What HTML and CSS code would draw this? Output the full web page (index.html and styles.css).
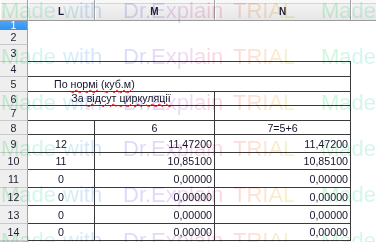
FILE: index.html
```html
<!DOCTYPE html>
<html lang="uk">
<head>
<meta charset="utf-8">
<title>Sheet</title>
<link rel="stylesheet" href="styles.css">
</head>
<body>
<div class="sheet">
  <div class="grid">
    <div class="ch"></div><div class="ch">L</div><div class="ch">M</div><div class="ch">N</div><div class="ch last"></div>

    <div class="rh sel">1</div><div class="s4"></div>
    <div class="rh">2</div><div class="s4"></div>
    <div class="rh">3</div><div class="s3 tb"></div><div></div>
    <div class="rh">4</div><div class="s3 b"></div><div></div>
    <div class="rh">5</div><div class="s3 b t5 vis"><span>По <span class="sp">нормі</span> (<span class="sp">куб.м</span>)</span></div><div></div>
    <div class="rh">6</div><div class="s2 b c vis up"><span>За <span class="sp">відсут</span> <span class="sp">циркуляції</span></span></div><div class="b"></div><div></div>
    <div class="rh">7</div><div class="s2 b"></div><div class="b"></div><div></div>
    <div class="rh">8</div><div class="b"></div><div class="b c">6</div><div class="b c">7=5+6</div><div></div>
    <div class="rh">9</div><div class="b c">12</div><div class="b r">11,47200</div><div class="b r">11,47200</div><div></div>
    <div class="rh">10</div><div class="b c">11</div><div class="b r">10,85100</div><div class="b r">10,85100</div><div></div>
    <div class="rh">11</div><div class="b c">0</div><div class="b r">0,00000</div><div class="b r">0,00000</div><div></div>
    <div class="rh">12</div><div class="b c">0</div><div class="b r">0,00000</div><div class="b r">0,00000</div><div></div>
    <div class="rh">13</div><div class="b c">0</div><div class="b r">0,00000</div><div class="b r">0,00000</div><div></div>
    <div class="rh">14</div><div class="b c">0</div><div class="b r">0,00000</div><div class="b r">0,00000</div><div></div>
    <div class="rh">15</div><div class="s4"></div>
  </div>

  <div class="watermark" aria-hidden="true">
    <div class="wl"><span class="wu"><span class="w1">Made</span><span class="w2">with</span><span class="w3">Dr.Explain</span><span class="w4">TRIAL</span></span><span class="wu"><span class="w1">Made</span><span class="w2">with</span><span class="w3">Dr.Explain</span><span class="w4">TRIAL</span></span></div>
    <div class="wl"><span class="wu"><span class="w1">Made</span><span class="w2">with</span><span class="w3">Dr.Explain</span><span class="w4">TRIAL</span></span><span class="wu"><span class="w1">Made</span><span class="w2">with</span><span class="w3">Dr.Explain</span><span class="w4">TRIAL</span></span></div>
    <div class="wl"><span class="wu"><span class="w1">Made</span><span class="w2">with</span><span class="w3">Dr.Explain</span><span class="w4">TRIAL</span></span><span class="wu"><span class="w1">Made</span><span class="w2">with</span><span class="w3">Dr.Explain</span><span class="w4">TRIAL</span></span></div>
    <div class="wl"><span class="wu"><span class="w1">Made</span><span class="w2">with</span><span class="w3">Dr.Explain</span><span class="w4">TRIAL</span></span><span class="wu"><span class="w1">Made</span><span class="w2">with</span><span class="w3">Dr.Explain</span><span class="w4">TRIAL</span></span></div>
    <div class="wl"><span class="wu"><span class="w1">Made</span><span class="w2">with</span><span class="w3">Dr.Explain</span><span class="w4">TRIAL</span></span><span class="wu"><span class="w1">Made</span><span class="w2">with</span><span class="w3">Dr.Explain</span><span class="w4">TRIAL</span></span></div>
    <div class="wl"><span class="wu"><span class="w1">Made</span><span class="w2">with</span><span class="w3">Dr.Explain</span><span class="w4">TRIAL</span></span><span class="wu"><span class="w1">Made</span><span class="w2">with</span><span class="w3">Dr.Explain</span><span class="w4">TRIAL</span></span></div>
  </div>
</div>
</body>
</html>
```
FILE: styles.css
```css
html, body {
  margin: 0;
  padding: 0;
  background: #fff;
}
body {
  width: 376px;
  height: 242px;
  overflow: hidden;
  font-family: "Liberation Sans", Arial, sans-serif;
  font-size: 10.67px;
  color: #14142a;
}
.sheet {
  position: relative;
  width: 376px;
  height: 242px;
  overflow: hidden;
}
.grid {
  display: grid;
  grid-template-columns: 28px 67px 120px 136px 1fr;
  grid-template-rows: 21px 9px 15px 17px 15px 15px 14px 15px 14px 18px 17px 18px 18px 18px 17px 1fr;
  height: 242px;
}
.grid > div {
  box-sizing: border-box;
  display: flex;
  align-items: center;
  min-width: 0;
  overflow: hidden;
  white-space: nowrap;
}
.grid > .vis {
  overflow: visible;
}
.grid > .up {
  padding-bottom: 2px;
}
.ch {
  background: linear-gradient(to bottom, #f8f8f8 0, #f8f8f8 3px, #d6d6d6 3px, #d6d6d6 4px, #f3f3f3 4px, #e6e6e6 100%);
  border-bottom: 1px solid #9c9c9c;
  border-right: 1px solid #a2a2a2;
  box-shadow: inset 1px 0 0 #fdfdfd;
  justify-content: center;
  font-weight: bold;
  font-size: 10px;
  color: #1e1e3a;
  padding-top: 3px;
}
.ch.last {
  border-right: none;
}
.rh {
  background: #efefef;
  border-right: 1px solid #a2a2a2;
  border-bottom: 1px solid #c9c9c9;
  justify-content: center;
  color: #1e1e30;
}
.rh.sel {
  background: linear-gradient(to bottom, #4aa6f8, #3594f0);
  color: #fff;
  border-bottom-color: #3594f0;
}
.s2 { grid-column: span 2; }
.s3 { grid-column: span 3; }
.s4 { grid-column: span 4; }
.tb {
  border-bottom: 1px solid #3a3a3a;
}
.b {
  border-right: 1px solid #3a3a3a;
  border-bottom: 1px solid #3a3a3a;
}
.c {
  justify-content: center;
}
.r {
  justify-content: flex-end;
  padding-right: 2px;
}
.t5 {
  padding-left: 26px;
}
.sp {
  text-decoration-line: underline;
  text-decoration-style: wavy;
  text-decoration-color: #e81818;
  text-decoration-thickness: 1px;
  text-underline-offset: 1px;
}

/* trial watermark overlay */
.watermark {
  position: absolute;
  left: 1px;
  top: -12px;
  pointer-events: none;
  mix-blend-mode: multiply;
  font-family: "Liberation Sans", Arial, sans-serif;
  font-size: 22px;
  line-height: 46px;
  white-space: nowrap;
}
.wl {
  display: flex;
  height: 46px;
}
.wu {
  display: inline-flex;
  flex: none;
  width: 320px;
  background: linear-gradient(90deg, #cdf7d6 0px, #d3f6f0 45px, #d5e5fa 90px, #dcd9f9 140px, #f4d7f3 185px, #fbd6dd 225px, #fde2d0 255px, #f5f5cb 295px, #d6f8d2 320px);
  -webkit-background-clip: text;
  background-clip: text;
  color: transparent;
}
.w1 { width: 62px; }
.w2 { width: 60px; }
.w3 { width: 110px; }
.w4 { width: 88px; }
```
